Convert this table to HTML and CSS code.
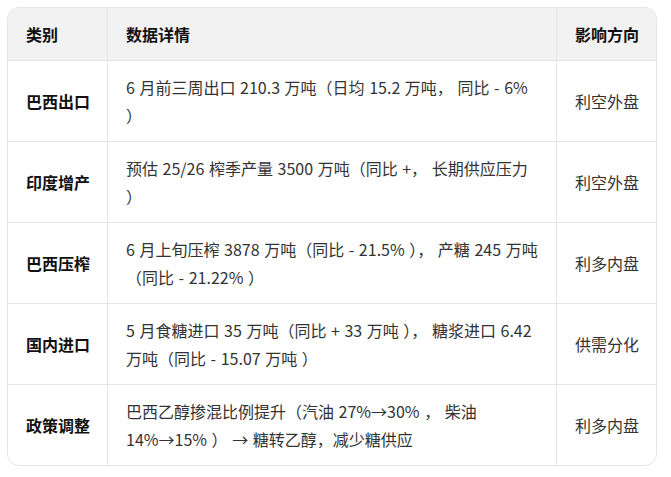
FILE: index.html
```html
<!DOCTYPE html>
<html lang="zh-CN">
<head>
<meta charset="utf-8">
<link rel="stylesheet" href="styles.css">
</head>
<body>
<div class="wrap">
<table class="data">
<colgroup><col class="c1"><col class="c2"><col class="c3"></colgroup>
<thead>
<tr><th>类别</th><th>数据详情</th><th>影响方向</th></tr>
</thead>
<tbody>
<tr><td class="cat">巴西出口</td><td class="detail">6 月前三周出口 210.3 万吨（日均 15.2 万吨， 同比 - 6%<br>）</td><td>利空外盘</td></tr>
<tr><td class="cat">印度增产</td><td class="detail">预估 25/26 榨季产量 3500 万吨（同比 +， 长期供应压力<br>）</td><td>利空外盘</td></tr>
<tr><td class="cat">巴西压榨</td><td class="detail">6 月上旬压榨 3878 万吨（同比 - 21.5% ）， 产糖 245 万吨<br>（同比 - 21.22% ）</td><td>利多内盘</td></tr>
<tr><td class="cat">国内进口</td><td class="detail">5 月食糖进口 35 万吨（同比 + 33 万吨 ）， 糖浆进口 6.42<br>万吨（同比 - 15.07 万吨 ）</td><td>供需分化</td></tr>
<tr><td class="cat">政策调整</td><td class="detail">巴西乙醇掺混比例提升（汽油 27%→30% ， 柴油<br>14%→15% ） → 糖转乙醇，减少糖供应</td><td>利多内盘</td></tr>
</tbody>
</table>
</div>
</body>
</html>
```
FILE: styles.css
```css
html, body { margin: 0; padding: 0; background: #fff; }
body {
  font-family: "Noto Sans CJK SC", "Noto Sans", sans-serif;
  font-size: 16px;
  color: #333;
}
.wrap { padding: 7px 14px 0 7px; }
.data {
  width: 650px;
  border-collapse: separate;
  border-spacing: 0;
  border: 1px solid #e5e5e5;
  border-radius: 12px;
  overflow: hidden;
  table-layout: fixed;
}
.c1 { width: 100px; }
.c2 { width: 449px; }
.c3 { width: 99px; }
th, td {
  padding: 12px 0 12px 18px;
  line-height: 28px;
  text-align: left;
  vertical-align: middle;
  white-space: nowrap;
  border-right: 1px solid #e5e5e5;
  border-bottom: 1px solid #e5e5e5;
}
th:last-child, td:last-child { border-right: none; }
tbody tr:last-child td { border-bottom: none; }
th {
  background: #f2f2f2;
  font-weight: 700;
  color: #111;
}
td.cat { font-weight: 700; color: #111; }
td.detail { word-spacing: 1px; }
```
